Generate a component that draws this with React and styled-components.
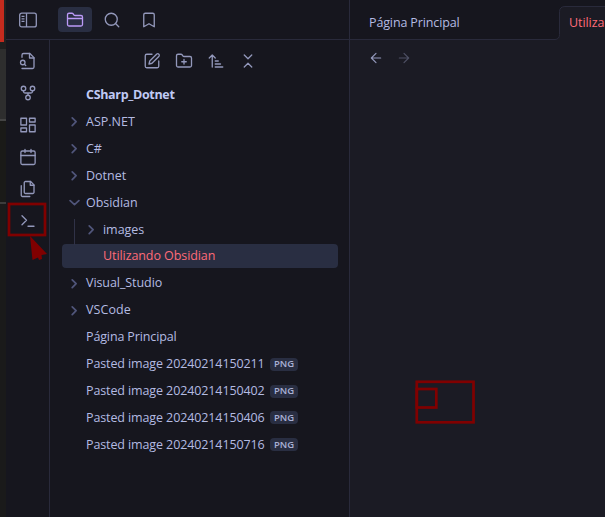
import React from "react";
import styled, { createGlobalStyle } from "styled-components";

const Global = createGlobalStyle`
  * { box-sizing: border-box; }
  body { margin: 0; overflow: hidden; background: #16161e; }
`;

const line = "#292a3b";

const Screen = styled.div`
  position: relative;
  display: flex;
  width: 605px;
  height: 517px;
  overflow: hidden;
  color: #b4bbe2;
  font: 12.5px/18px "Open Sans", "Noto Sans", sans-serif;
`;

const Behind = styled.div`
  display: flex;
  flex-direction: column;
  flex: 0 0 6px;
  background: #1a1a1a;
`;
const Strip = styled.div`
  height: ${(p) => p.$h}px;
  flex: none;
  background: ${(p) => p.$bg};
`;
const RedStrip = styled(Strip)`
  border-right: 2px solid #222222;
`;

const AppWindow = styled.div`
  display: flex;
  flex: 1;
  min-width: 0;
  background: #16161e;
`;
const LeftPane = styled.div`
  display: flex;
  flex-direction: column;
  flex: 0 0 344px;
  border-right: 1px solid ${line};
`;
const TopBar = styled.header`
  display: flex;
  align-items: center;
  flex: 0 0 40px;
  padding-left: 13px;
  border-bottom: 1px solid ${line};
`;
const TopButton = styled.div`
  display: flex;
  align-items: center;
  justify-content: center;
  width: ${(p) => p.$w}px;
  height: 25px;
  margin-left: ${(p) => p.$ml || 0}px;
  border-radius: 4px;
  color: ${(p) => (p.$active ? "#bb9af7" : "#9398bb")};
  background: ${(p) => (p.$active ? "#292e42" : "transparent")};
`;
const Body = styled.div`
  display: flex;
  flex: 1;
`;
const Ribbon = styled.nav`
  display: flex;
  flex-direction: column;
  align-items: center;
  gap: 14px;
  flex: 0 0 44px;
  padding-top: 12px;
  border-right: 1px solid ${line};
  color: #9398bb;
`;
const Explorer = styled.section`
  flex: 1;
  padding: 12px 11px 0 12px;
`;
const Actions = styled.div`
  display: flex;
  justify-content: center;
  gap: 14px;
  height: 30.9px;
  color: #9398bb;
`;
const Row = styled.div`
  display: flex;
  align-items: center;
  height: 24px;
  margin-bottom: 2.93px;
  padding-left: ${(p) => (p.$nested ? 24 : 7)}px;
  border-radius: 4px;
  white-space: nowrap;
  font-weight: ${(p) => (p.$bold ? 700 : 400)};
  color: ${(p) => (p.$active ? "#ff6b78" : p.$bold ? "#c0caf5" : "inherit")};
  background: ${(p) => (p.$active ? "#292e42" : "transparent")};
`;
const NestedGroup = styled.div`
  position: relative;
  &::before {
    content: "";
    position: absolute;
    left: 12px;
    top: 1px;
    height: 26px;
    width: 1px;
    background: #303247;
  }
`;
const Chevron = styled.span`
  display: flex;
  width: 17px;
  color: #50557a;
`;
const Label = styled.span`
  letter-spacing: ${(p) => p.$ls || 0}px;
`;
const Badge = styled.span`
  display: flex;
  align-items: center;
  justify-content: center;
  width: 28px;
  height: 13px;
  margin-left: auto;
  margin-right: 40px;
  border-radius: 4px;
  background: #292e42;
  color: #a9b1d6;
  font-size: 9.5px;
  font-weight: 600;
`;
const Editor = styled.main`
  display: flex;
  flex-direction: column;
  flex: 1;
  min-width: 0;
  background: #1b1b24;
`;
const Tabs = styled.div`
  display: flex;
  flex: 0 0 40px;
  background: #16161e;
`;
const Tab = styled.div`
  flex: 0 0 205px;
  height: 40px;
  padding: 14px 0 0 19px;
  border-bottom: 1px solid ${line};
`;
const TabCurve = styled.svg`
  flex: none;
  display: block;
`;
const ActiveTab = styled.div`
  flex: 1;
  height: 34px;
  margin-top: 6px;
  padding: 7px 0 0 4px;
  overflow: hidden;
  white-space: nowrap;
  color: #ff6b78;
  border-top: 1px solid ${line};
  background: #1b1b24;
`;
const History = styled.div`
  display: flex;
  gap: 12px;
  padding: 10px 0 0 18px;
  color: #9398bb;
`;
const Faded = styled.span`
  display: flex;
  opacity: 0.42;
`;
const Annotations = styled.svg`
  position: absolute;
  inset: 0;
`;

const Icon = ({ size = 18, sw = 1.75, children }) => (
  <svg
    width={size}
    height={size}
    viewBox="0 0 24 24"
    fill="none"
    stroke="currentColor"
    strokeWidth={sw}
    strokeLinecap="round"
    strokeLinejoin="round"
  >
    {children}
  </svg>
);

const Arrow = ({ open }) => (
  <Chevron>
    <Icon size={11} sw={3.8}>
      <path d={open ? "M2.500 8 12 16.500 21.500 8" : "M7 4l8.500 8.500L7 21"} />
    </Icon>
  </Chevron>
);
const Folder = ({ name, open, nested, ls }) => (
  <Row $nested={nested}>
    <Arrow open={open} />
    <Label $ls={ls}>{name}</Label>
  </Row>
);
const File = ({ name, bold, active, nested, png, ls }) => (
  <Row $bold={bold} $active={active} $nested={nested}>
    <Chevron />
    <Label $ls={ls}>{name}</Label>
    {png && <Badge>PNG</Badge>}
  </Row>
);

const images = ["20240214150211", "20240214150402", "20240214150406", "20240214150716"];

export default function App() {
  return (
    <Screen>
      <Global />
      <Behind>
        <RedStrip $h={42} $bg="#c42b1e" />
        <Strip $h={7} $bg="#1f1f1f" />
        <Strip $h={70} $bg="#2e2e2e" />
        <Strip $h={2} $bg="#444444" />
        <Strip $h={81} $bg="#1a1a18" />
        <Strip $h={2} $bg="#3c3c3c" />
      </Behind>
      <AppWindow>
        <LeftPane>
          <TopBar>
            <TopButton $w={18}>
              <svg width="18" height="16" viewBox="0 0 18 16" fill="none" stroke="currentColor" strokeWidth="1.3">
                <rect x=".7" y="1.2" width="16.6" height="13.7" rx="2" />
                <path d="M7.5 1.2v13.7M2.5 4.3h3M2.5 6.8h3M2.5 9.3h3" />
              </svg>
            </TopButton>
            <TopButton $w={34} $ml={21} $active>
              <Icon>
                <path d="M4 20h16a2 2 0 0 0 2-2V8a2 2 0 0 0-2-2h-7.9a2 2 0 0 1-1.7-.9l-.8-1.2A2 2 0 0 0 7.9 3H4a2 2 0 0 0-2 2v13c0 1.1.9 2 2 2ZM2 10h20" />
              </Icon>
            </TopButton>
            <TopButton $w={34} $ml={3}>
              <Icon>
                <circle cx="11" cy="11" r="8" />
                <path d="m21 21-4.3-4.3" />
              </Icon>
            </TopButton>
            <TopButton $w={34} $ml={3}>
              <Icon>
                <path d="m19 21-7-4-7 4V5a2 2 0 0 1 2-2h10a2 2 0 0 1 2 2Z" />
              </Icon>
            </TopButton>
          </TopBar>
          <Body>
            <Ribbon>
              <Icon>
                <path d="M4 22h14a2 2 0 0 0 2-2V7.5L14.5 2H6a2 2 0 0 0-2 2v3" />
                <path d="M14 2v6h6M5 17a3 3 0 1 0 0-6 3 3 0 0 0 0 6ZM9 18l-1.5-1.5" />
              </Icon>
              <Icon>
                <circle cx="12" cy="18" r="3" />
                <circle cx="6" cy="6" r="3" />
                <circle cx="18" cy="6" r="3" />
                <path d="M18 9v1a2 2 0 0 1-2 2H8a2 2 0 0 1-2-2V9M12 12v3" />
              </Icon>
              <Icon>
                <rect x="2.5" y="3" width="7.5" height="9" />
                <rect x="14" y="3" width="7.5" height="5" />
                <rect x="14" y="12" width="7.5" height="9" />
                <rect x="2.5" y="16" width="7.5" height="5" />
              </Icon>
              <Icon>
                <rect x="2.5" y="4" width="19" height="18" rx="2" />
                <path d="M16 2v4M8 2v4M2.5 10h19" />
              </Icon>
              <Icon>
                <path d="M15.5 2H8.6c-.4 0-.8.2-1.1.5-.3.3-.5.7-.5 1.1v12.8c0 .4.2.8.5 1.1.3.3.7.5 1.1.5h9.8c.4 0 .8-.2 1.1-.5.3-.3.5-.7.5-1.1V6.5L15.5 2z" />
                <path d="M3 7.6v12.8c0 .4.2.8.5 1.1.3.3.7.5 1.1.5h9.8M15 2v5h5" />
              </Icon>
              <Icon>
                <path d="m4 17 6-6-6-6M12 19h8" />
              </Icon>
            </Ribbon>
            <Explorer>
              <Actions>
                <Icon>
                  <path d="M12 3H5a2 2 0 0 0-2 2v14a2 2 0 0 0 2 2h14a2 2 0 0 0 2-2v-7" />
                  <path d="M18.4 2.6a2.17 2.17 0 0 1 3 3L12 15l-4 1 1-4Z" />
                </Icon>
                <Icon>
                  <path d="M4 20h16a2 2 0 0 0 2-2V8a2 2 0 0 0-2-2h-7.9a2 2 0 0 1-1.7-.9l-.8-1.2A2 2 0 0 0 7.9 3H4a2 2 0 0 0-2 2v13c0 1.1.9 2 2 2ZM12 10v6M9 13h6" />
                </Icon>
                <Icon>
                  <path d="m3 8 4-4 4 4M7 4v16M11 12h4M11 16h7M11 20h10" />
                </Icon>
                <Icon>
                  <path d="m7 20 5-5 5 5M7 4l5 5 5-5" />
                </Icon>
              </Actions>
              <File name="CSharp_Dotnet" bold ls={-0.33} />
              <Folder name="ASP.NET" />
              <Folder name="C#" />
              <Folder name="Dotnet" />
              <Folder name="Obsidian" open ls={-0.05} />
              <NestedGroup>
                <Folder name="images" nested ls={-0.05} />
                <File name="Utilizando Obsidian" nested active ls={-0.08} />
              </NestedGroup>
              <Folder name="Visual_Studio" ls={-0.07} />
              <Folder name="VSCode" ls={0.1} />
              <File name="Página Principal" ls={-0.13} />
              {images.map((id) => (
                <File key={id} name={`Pasted image ${id}`} png ls={-0.11} />
              ))}
            </Explorer>
          </Body>
        </LeftPane>
        <Editor>
          <Tabs>
            <Tab>
              <Label $ls={-0.13}>Página Principal</Label>
            </Tab>
            <TabCurve width="10" height="40" viewBox="0 0 10 40">
              <path d="M0 39.5c3 0 4.500-2 4.500-5V11.500c0-3 2-5 5.500-5V40H0Z" fill="#1b1b24" />
              <path d="M0 39.500c3 0 4.500-2 4.500-5V11.500c0-3 2-5 5.500-5" fill="none" stroke={line} />
            </TabCurve>
            <ActiveTab>
              <Label $ls={-0.08}>Utilizando Obsidian</Label>
            </ActiveTab>
          </Tabs>
          <History>
            <Icon size={16}>
              <path d="m12 19-7-7 7-7M19 12H5" />
            </Icon>
            <Faded>
              <Icon size={16}>
                <path d="M5 12h14M12 5l7 7-7 7" />
              </Icon>
            </Faded>
          </History>
        </Editor>
      </AppWindow>
      <Annotations width="605" height="517" fill="none" stroke="#800000" strokeWidth="2.7">
        <rect x="9" y="204" width="36" height="31" />
        <rect x="416.800" y="381.800" width="56.700" height="40.500" />
        <rect x="416.800" y="389" width="19.500" height="18.500" />
        <path d="M30 236 47 254l-5.500 1 .5 4-3 1-1-2.500L32.500 260Z" fill="#800000" stroke="none" />
      </Annotations>
    </Screen>
  );
}
